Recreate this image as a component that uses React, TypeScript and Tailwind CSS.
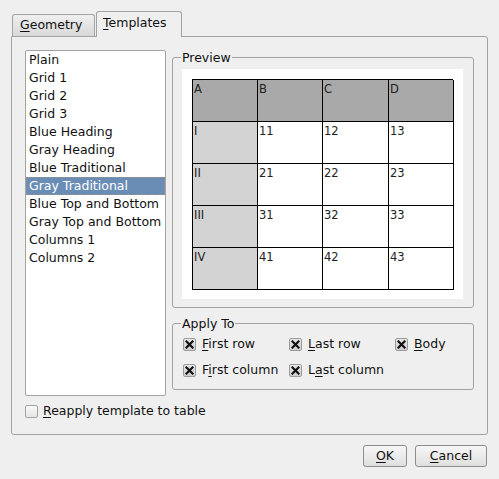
import type { ReactNode } from "react";

const templates = [
	"Plain",
	"Grid 1",
	"Grid 2",
	"Grid 3",
	"Blue Heading",
	"Gray Heading",
	"Blue Traditional",
	"Gray Traditional",
	"Blue Top and Bottom",
	"Gray Top and Bottom",
	"Columns 1",
	"Columns 2",
];

const header = ["A", "B", "C", "D"];
const rows = [
	["I", "11", "12", "13"],
	["II", "21", "22", "23"],
	["III", "31", "32", "33"],
	["IV", "41", "42", "43"],
];

function U({ children }: { children: ReactNode }) {
	return <span className="underline decoration-1 underline-offset-2">{children}</span>;
}

function Check({ checked }: { checked?: boolean }) {
	return (
		<span
			className={
				checked
					? "flex h-[13px] w-[13px] shrink-0 items-center justify-center rounded-[2px] border border-[#9c9c9c] bg-linear-to-b from-[#e6e6e6] to-[#cfcfcf]"
					: "flex h-[13px] w-[13px] shrink-0 items-center justify-center rounded-[2px] border border-[#a4a4a4] bg-linear-to-b from-[#fbfbfb] to-[#e4e4e4]"
			}
		>
			{checked && (
				<svg width="9" height="9" viewBox="0 0 9 9">
					<path d="M1.5 1.5l6 6M7.5 1.5l-6 6" stroke="#111" strokeWidth="2.2" strokeLinecap="square" />
				</svg>
			)}
		</span>
	);
}

function Option({ children }: { children: ReactNode }) {
	return (
		<label className="flex items-center gap-[6px] h-[16px] leading-[16px]">
			<Check checked />
			<span>{children}</span>
		</label>
	);
}

export default function App() {
	return (
		<div className="w-[499px] h-[479px] bg-[#efefef] font-['DejaVu_Sans',sans-serif] text-[12.5px] text-[#111] flex flex-col pt-[11px] px-[11px]">
			{/* tabs */}
			<div className="relative z-10 flex items-end h-[25px] pl-[1px]">
				<div className="h-[22px] w-[83px] border border-b-0 border-[#a3a3a3] rounded-t-[3px] bg-linear-to-b from-[#f0f0f0] to-[#d8d8d8] flex items-center pl-[7px]">
					<span>
						<U>G</U>eometry
					</span>
				</div>
				<div className="h-[26px] w-[86px] -mb-[1px] ml-[1px] border border-b-0 border-[#a3a3a3] rounded-t-[3px] bg-[#efefef] flex items-center pl-[6px] pb-[2px]">
					<span>
						<U>T</U>emplates
					</span>
				</div>
			</div>

			{/* tab page */}
			<div className="h-[399px] border border-[#a3a3a3] rounded-[3px] rounded-tl-none flex gap-[6px] pl-[13px] pt-[13px]">
				<div className="w-[141px] flex flex-col">
					<div className="h-[346px] border border-[#a3a3a3] rounded-[2px] bg-white">
						{templates.map((t) => (
							<div
								key={t}
								className={
									t === "Gray Traditional"
										? "h-[18px] leading-[18px] px-[3px] bg-[#6a8db5] text-white outline-1 outline-dotted outline-[#c39563]/60 -outline-offset-1 whitespace-nowrap"
										: "h-[18px] leading-[18px] px-[3px] whitespace-nowrap"
								}
							>
								{t}
							</div>
						))}
					</div>
					<label className="mt-[7px] flex items-center gap-[5px] h-[16px] whitespace-nowrap">
						<Check />
						<span>
							<U>R</U>eapply template to table
						</span>
					</label>
				</div>

				<div className="w-[302px] flex flex-col">
					<fieldset className="border border-[#a3a3a3] rounded-[3px] pb-[8px]">
						<legend className="ml-[8px] px-[1px] leading-[15px]">Preview</legend>
						<div className="mt-[4px] ml-[9px] w-[281px] h-[230px] bg-white p-[10px]">
							<div className="grid grid-cols-[65px_65px_66px_65px] border-l border-t border-black text-[11.5px] text-[#222]">
								{header.map((h) => (
									<div key={h} className="h-[42px] border-r border-b border-black bg-[#a9a9a9] pl-[1px] pt-[2px] leading-[14px]">
										{h}
									</div>
								))}
								{rows.map((r) =>
									r.map((c, i) => (
										<div
											key={c}
											className={
												i === 0
													? "h-[42px] border-r border-b border-black bg-[#d3d3d3] pl-[1px] pt-[2px] leading-[14px]"
													: "h-[42px] border-r border-b border-black bg-white pl-[1px] pt-[2px] leading-[14px]"
											}
										>
											{c}
										</div>
									)),
								)}
							</div>
						</div>
					</fieldset>

					<fieldset className="mt-[8px] border border-[#a3a3a3] rounded-[3px] pl-[10px] pt-[5px] pb-[11px]">
						<legend className="ml-[-2px] px-[1px] leading-[15px]">Apply To</legend>
						<div className="grid grid-cols-[106px_106px_auto] gap-y-[10px] whitespace-nowrap">
							<Option>
								<U>F</U>irst row
							</Option>
							<Option>
								<U>L</U>ast row
							</Option>
							<Option>
								<U>B</U>ody
							</Option>
							<Option>
								F<U>i</U>rst column
							</Option>
							<Option>
								L<U>a</U>st column
							</Option>
						</div>
					</fieldset>
				</div>
			</div>

			{/* buttons */}
			<div className="mt-[10px] flex justify-end gap-[8px] pr-[1px]">
				<button className="h-[22px] w-[44px] border border-[#8e8e8e] rounded-[3px] bg-linear-to-b from-[#f7f7f7] to-[#dfdfdf]">
					<U>O</U>K
				</button>
				<button className="h-[22px] w-[72px] border border-[#8e8e8e] rounded-[3px] bg-linear-to-b from-[#f7f7f7] to-[#dfdfdf]">
					<U>C</U>ancel
				</button>
			</div>
		</div>
	);
}
